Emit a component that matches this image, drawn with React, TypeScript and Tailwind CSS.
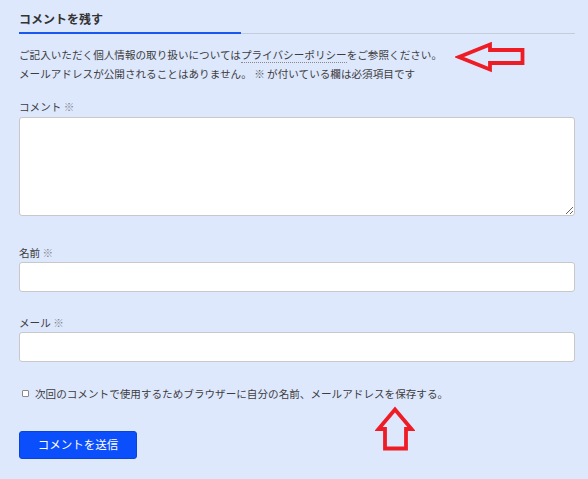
import React from "react";

const font = { fontFamily: '"Noto Sans CJK JP", "Noto Sans", sans-serif' };

function Required() {
  return <span className="text-[#7d828a]">※</span>;
}

export default function App() {
  return (
    <div
      className="relative min-h-screen bg-[#dde8fd] pl-[19px] pr-[13px] pt-[9px] text-[#3d3d3d]"
      style={font}
    >
      {/* heading */}
      <div className="relative border-b border-[#c3ccda] pb-[4px]">
        <h3 className="text-[12px] font-bold leading-[20px] text-[#333]">コメントを残す</h3>
        <span className="absolute bottom-[-1px] left-0 h-[2px] w-[222px] bg-[#1a56f0]" />
      </div>

      <p className="mt-[11px] text-[10.6px] leading-[19px]">
        ご記入いただく個人情報の取り扱いについては
        <span className="border-b border-dotted border-[#888]">プライバシーポリシー</span>
        をご参照ください。
        <br />
        メールアドレスが公開されることはありません。 <span className="text-[#555]">※</span> が付いている欄は必須項目です
      </p>

      <form className="flex flex-col" onSubmit={(e) => e.preventDefault()}>
        <label className="mt-[14px] text-[10.6px] leading-[19px]">
          コメント <Required />
        </label>
        <textarea className="mt-[1px] block h-[99px] w-full resize-y rounded-[3px] border border-[#c8c8c8] bg-white" />

        <label className="mt-[27px] text-[10.6px] leading-[19px]">
          名前 <Required />
        </label>
        <input className="block h-[30px] w-full rounded-[3px] border border-[#c8c8c8] bg-white" />

        <label className="mt-[21px] text-[10.6px] leading-[19px]">
          メール <Required />
        </label>
        <input className="block h-[30px] w-full rounded-[3px] border border-[#c8c8c8] bg-white" />

        <div className="mt-[22px] flex items-center pl-[3px] text-[10.6px] leading-[19px]">
          <span className="mr-[6px] inline-block h-[7px] w-[7px] rounded-[1px] border border-[#8a8a8a] bg-white" />
          次回のコメントで使用するためブラウザーに自分の名前、メールアドレスを保存する。
        </div>

        <div className="mt-[27px]">
          <button
            type="submit"
            className="h-[28px] w-[118px] rounded-[3px] border border-[#0a43d8] bg-[#0b4efb] text-[11.5px] text-white"
          >
            コメントを送信
          </button>
        </div>
      </form>

      {/* annotation arrows */}
      <svg className="absolute left-[455px] top-[41px]" width="72" height="32" viewBox="0 0 72 32">
        <path
          d="M4 16 L35 3.5 L35 9 L67.5 9 L67.5 22 L35 22 L35 28.5 Z"
          fill="none"
          stroke="#ee1c25"
          strokeWidth="3.8"
          strokeLinejoin="miter"
        />
      </svg>
      <svg className="absolute left-[375px] top-[406px]" width="40" height="46" viewBox="0 0 40 46">
        <path
          d="M20 3.5 L36.5 23 L31 23 L31 42.5 L10 42.5 L10 23 L3.5 23 Z"
          fill="none"
          stroke="#ee1c25"
          strokeWidth="3.8"
          strokeLinejoin="miter"
        />
      </svg>
    </div>
  );
}
